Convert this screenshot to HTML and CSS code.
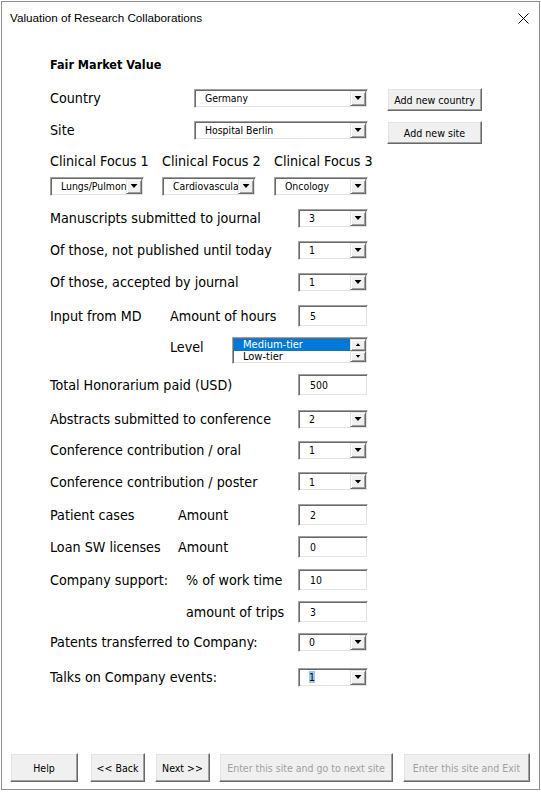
FILE: index.html
```html
<!DOCTYPE html>
<html>
<head>
<meta charset="utf-8">
<title>Valuation of Research Collaborations</title>
<link rel="stylesheet" href="styles.css">
</head>
<body>
<div class="window">
  <div class="titlebar">
    <span class="title">Valuation of Research Collaborations</span>
    <svg class="close" width="11" height="11" viewBox="0 0 11 11"><path d="M0.5 0.5L10.5 10.5M10.5 0.5L0.5 10.5" stroke="#000" stroke-width="1" fill="none"/></svg>
  </div>

  <div class="form">
    <div class="row"><span class="heading">Fair Market Value</span></div>

    <div class="row">
      <span class="lbl w144">Country</span>
      <div class="combo w174"><span class="val">Germany</span><span class="drop"></span></div>
      <button class="btn add add-top">Add new country</button>
    </div>

    <div class="row">
      <span class="lbl w144">Site</span>
      <div class="combo w174"><span class="val">Hospital Berlin</span><span class="drop"></span></div>
      <button class="btn add add-site">Add new site</button>
    </div>

    <div class="row">
      <span class="lbl w112">Clinical Focus 1</span>
      <span class="lbl w112">Clinical Focus 2</span>
      <span class="lbl w112">Clinical Focus 3</span>
    </div>

    <div class="row focus">
      <div class="combo w94"><span class="val">Lungs/Pulmon</span><span class="drop"></span></div>
      <div class="combo w94"><span class="val">Cardiovascula</span><span class="drop"></span></div>
      <div class="combo w94"><span class="val">Oncology</span><span class="drop"></span></div>
    </div>

    <div class="row">
      <span class="lbl w248">Manuscripts submitted to journal</span>
      <div class="combo w70"><span class="val">3</span><span class="drop"></span></div>
    </div>

    <div class="row">
      <span class="lbl w248">Of those, not published until today</span>
      <div class="combo w70"><span class="val">1</span><span class="drop"></span></div>
    </div>

    <div class="row">
      <span class="lbl w248">Of those, accepted by journal</span>
      <div class="combo w70"><span class="val">1</span><span class="drop"></span></div>
    </div>

    <div class="row">
      <span class="lbl w120">Input from MD</span>
      <span class="lbl w128">Amount of hours</span>
      <div class="textbox w70"><span class="val">5</span></div>
    </div>

    <div class="row">
      <span class="lbl w120"></span>
      <span class="lbl w62 lvl">Level</span>
      <div class="listbox">
        <div class="items">
          <div class="item sel">Medium-tier</div>
          <div class="item">Low-tier</div>
        </div>
        <div class="vscroll">
          <span class="sbtn up"></span>
          <span class="sbtn down"></span>
        </div>
      </div>
    </div>

    <div class="row">
      <span class="lbl w248">Total Honorarium paid (USD)</span>
      <div class="textbox w70"><span class="val">500</span></div>
    </div>

    <div class="row">
      <span class="lbl w248">Abstracts submitted to conference</span>
      <div class="combo w70"><span class="val">2</span><span class="drop"></span></div>
    </div>

    <div class="row">
      <span class="lbl w248">Conference contribution / oral</span>
      <div class="combo w70"><span class="val">1</span><span class="drop"></span></div>
    </div>

    <div class="row">
      <span class="lbl w248">Conference contribution / poster</span>
      <div class="combo w70"><span class="val">1</span><span class="drop"></span></div>
    </div>

    <div class="row">
      <span class="lbl w128">Patient cases</span>
      <span class="lbl w120">Amount</span>
      <div class="textbox w70"><span class="val">2</span></div>
    </div>

    <div class="row">
      <span class="lbl w128">Loan SW licenses</span>
      <span class="lbl w120">Amount</span>
      <div class="textbox w70"><span class="val">0</span></div>
    </div>

    <div class="row">
      <span class="lbl w136">Company support:</span>
      <span class="lbl w112">% of work time</span>
      <div class="textbox w70"><span class="val">10</span></div>
    </div>

    <div class="row">
      <span class="lbl w136"></span>
      <span class="lbl w112">amount of trips</span>
      <div class="textbox w70"><span class="val">3</span></div>
    </div>

    <div class="row">
      <span class="lbl w248">Patents transferred to Company:</span>
      <div class="combo w70"><span class="val">0</span><span class="drop"></span></div>
    </div>

    <div class="row">
      <span class="lbl w248">Talks on Company events:</span>
      <div class="combo w70"><span class="val"><span class="hl">1</span></span><span class="drop"></span></div>
    </div>
  </div>

  <div class="footer">
    <button class="btn foot b-help">Help</button>
    <button class="btn foot b-back">&lt;&lt; Back</button>
    <button class="btn foot b-next">Next &gt;&gt;</button>
    <button class="btn foot b-enext" disabled>Enter this site and go to next site</button>
    <button class="btn foot b-exit" disabled>Enter this site and Exit</button>
  </div>
</div>
</body>
</html>
```

FILE: styles.css
```css
html, body {
  margin: 0;
  padding: 0;
  background: #ffffff;
}

.window {
  margin: 1px 0 0 1px;
  width: 539px;
  height: 789px;
  box-sizing: border-box;
  border: 1px solid #8f8f8f;
  background: #ffffff;
  display: flex;
  flex-direction: column;
  font-family: "DejaVu Sans Condensed", "DejaVu Sans", sans-serif;
  color: #000;
}

/* title bar */
.titlebar {
  height: 31px;
  flex: none;
  display: flex;
  align-items: center;
  justify-content: space-between;
  padding: 0 10px 0 8px;
}
.title {
  font-family: "Liberation Sans", Arial, sans-serif;
  font-size: 11.7px;
  color: #000;
}
.close {
  display: block;
  margin-top: 1px;
}

/* form grid */
.form {
  display: grid;
  grid-template-rows: 48px 20px 44px 18px 32px 32px 32px 32px 35px 35px 34px 34px 28px 35px 32px 32px 33px 31px 30px 40px;
  padding: 7px 0 0 48px;
}
.row {
  display: flex;
  align-items: center;
  min-width: 0;
}
.focus {
  gap: 18px;
}

.heading {
  font-weight: bold;
  font-size: 12.5px;
}
.lbl {
  font-size: 14.2px;
  white-space: nowrap;
  flex: none;
}
.w62 { width: 62px; }
.w112 { width: 112px; }
.w120 { width: 120px; }
.w128 { width: 128px; }
.w136 { width: 136px; }
.w144 { width: 144px; }
.w248 { width: 248px; }
.lvl { margin-top: -8px; }

/* combo boxes and text boxes: sunken 3D border */
.combo, .textbox, .listbox {
  flex: none;
  box-sizing: border-box;
  border: 1px solid;
  border-color: #a0a0a0 #ffffff #ffffff #a0a0a0;
  box-shadow: inset 1px 1px #696969, inset -1px -1px #e3e3e3;
  background: #ffffff;
  padding: 1px;
  display: flex;
  align-items: center;
}
.combo { height: 19px; }
.textbox { height: 22px; }
.w70 { width: 70px; }
.w94 { width: 94px; }
.w174 { width: 174px; }

.val {
  flex: 1;
  min-width: 0;
  overflow: hidden;
  white-space: nowrap;
  font-size: 10.4px;
  padding-left: 9px;
}
.textbox .val { padding-left: 10px; }
.hl { background: #99c9ef; }

.drop {
  flex: none;
  width: 16px;
  height: 15px;
  box-sizing: border-box;
  background: #f0f0f0;
  border: 1px solid;
  border-color: #e3e3e3 #696969 #696969 #e3e3e3;
  box-shadow: inset 1px 1px #ffffff, inset -1px -1px #a0a0a0;
  display: flex;
  align-items: center;
  justify-content: center;
}
.drop::after {
  content: "";
  width: 7px;
  height: 4px;
  background: #000;
  clip-path: polygon(0 0, 100% 0, 50% 100%);
}

/* listbox */
.listbox {
  width: 136px;
  height: 27px;
  align-items: stretch;
}
.items {
  flex: 1;
  display: flex;
  flex-direction: column;
}
.item {
  height: 12px;
  line-height: 12px;
  font-size: 11px;
  padding-left: 9px;
  white-space: nowrap;
}
.item.sel {
  background: #0078d7;
  color: #ffffff;
}
.vscroll {
  flex: none;
  width: 16px;
  display: flex;
  flex-direction: column;
}
.sbtn {
  flex: 1;
  box-sizing: border-box;
  background: #f0f0f0;
  border: 1px solid;
  border-color: #e3e3e3 #696969 #696969 #e3e3e3;
  box-shadow: inset 1px 1px #ffffff, inset -1px -1px #a0a0a0;
  display: flex;
  align-items: center;
  justify-content: center;
}
.sbtn::after {
  content: "";
  width: 5px;
  height: 3px;
  background: #000;
}
.sbtn.up::after { clip-path: polygon(50% 0, 100% 100%, 0 100%); }
.sbtn.down::after { clip-path: polygon(0 0, 100% 0, 50% 100%); }

/* buttons: raised 3D */
.btn {
  box-sizing: border-box;
  margin: 0;
  padding: 0;
  background: #f0f0f0;
  border: 1px solid;
  border-color: #ffffff #696969 #696969 #ffffff;
  box-shadow: inset -1px -1px #a0a0a0, inset 1px 1px #e3e3e3;
  font-family: "DejaVu Sans Condensed", "DejaVu Sans", sans-serif;
  color: #000;
  flex: none;
}
.btn:disabled { color: #a0a0a0; }

.add {
  width: 95px;
  height: 23px;
  margin-left: 19px;
  font-size: 10.6px;
  align-self: flex-start;
}
.add-site { margin-top: 13px; }

.footer {
  margin-top: auto;
  display: flex;
  padding: 0 0 7px 8px;
}
.foot {
  height: 29px;
  font-size: 10.5px;
}
.b-help { width: 68px; }
.b-back { width: 55px; margin-left: 12px; }
.b-next { width: 55px; margin-left: 10px; }
.b-enext { width: 174px; margin-left: 9px; }
.b-exit { width: 127px; margin-left: 10px; }
```
